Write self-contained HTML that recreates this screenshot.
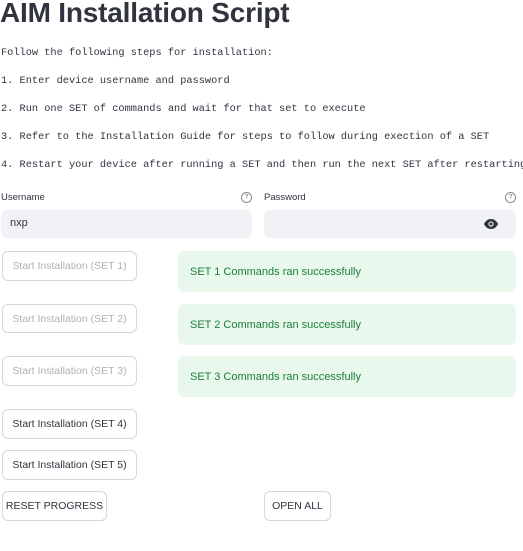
<!DOCTYPE html><html><head><style>
body{margin:0;width:523px;height:551px;background:#fff;position:relative;overflow:hidden;font-family:"Liberation Sans",sans-serif;color:#31333f}
.a{position:absolute}
h1{position:absolute;left:0;top:-3px;margin:0;font-size:28px;font-weight:bold;letter-spacing:-0.2px;color:#31333f}
.m{position:absolute;left:1px;font-family:"Liberation Mono",monospace;font-size:10.3px;white-space:nowrap;color:#31333f}
.lbl{font-size:9.5px}
.inp{background:#f0f2f6;border-radius:6px;height:28px}
.btn{border:1px solid #d6d6db;border-radius:6px;background:#fff;font-size:10.5px;display:flex;align-items:center;justify-content:center;box-sizing:border-box}
.dis{color:#b0b1b8}
.al{background:#e8f8ec;border-radius:6px;left:178px;width:338px;height:41px;color:#1e7d3c;font-size:11px;display:flex;align-items:center;padding-left:12px;box-sizing:border-box}
.q{width:9px;height:9px;border:1px solid #888;border-radius:50%;font-size:7px;text-align:center;line-height:9px;color:#777}
</style></head><body>
<h1>AIM Installation Script</h1>
<div class="m" style="top:47px">Follow the following steps for installation:</div>
<div class="m" style="top:75px">1. Enter device username and password</div>
<div class="m" style="top:103px">2. Run one SET of commands and wait for that set to execute</div>
<div class="m" style="top:131px">3. Refer to the Installation Guide for steps to follow during exection of a SET</div>
<div class="m" style="top:159px">4. Restart your device after running a SET and then run the next SET after restarting</div>
<div class="a lbl" style="left:1px;top:192px">Username</div>
<div class="a q" style="left:241px;top:192px">?</div>
<div class="a lbl" style="left:264px;top:192px">Password</div>
<div class="a q" style="left:505px;top:192px">?</div>
<div class="a inp" style="left:1px;top:210px;width:251px"><span style="position:absolute;left:9px;top:7px;font-size:11px">nxp</span></div>
<div class="a inp" style="left:264px;top:210px;width:252px">
<svg style="position:absolute;left:220px;top:9px" width="14" height="10" viewBox="0 0 14 10"><path d="M7 0C3.5 0 1 2.5 0 5c1 2.5 3.5 5 7 5s6-2.5 7-5C13 2.5 10.5 0 7 0z" fill="#31333f"/><circle cx="7" cy="5" r="2.6" fill="#f0f2f6"/><circle cx="7" cy="5" r="1.5" fill="#31333f"/></svg></div>
<div class="a btn dis" style="left:2px;top:251px;width:135px;height:30px">Start Installation (SET 1)</div>
<div class="a btn dis" style="left:2px;top:304px;width:135px;height:29px">Start Installation (SET 2)</div>
<div class="a btn dis" style="left:2px;top:356px;width:135px;height:30px">Start Installation (SET 3)</div>
<div class="a btn" style="left:2px;top:409px;width:135px;height:30px">Start Installation (SET 4)</div>
<div class="a btn" style="left:2px;top:450px;width:135px;height:30px">Start Installation (SET 5)</div>
<div class="a btn" style="left:2px;top:491px;width:105px;height:30px">RESET PROGRESS</div>
<div class="a btn" style="left:264px;top:491px;width:67px;height:30px">OPEN ALL</div>
<div class="a al" style="top:251px">SET 1 Commands ran successfully</div>
<div class="a al" style="top:304px">SET 2 Commands ran successfully</div>
<div class="a al" style="top:356px">SET 3 Commands ran successfully</div>
</body></html>
